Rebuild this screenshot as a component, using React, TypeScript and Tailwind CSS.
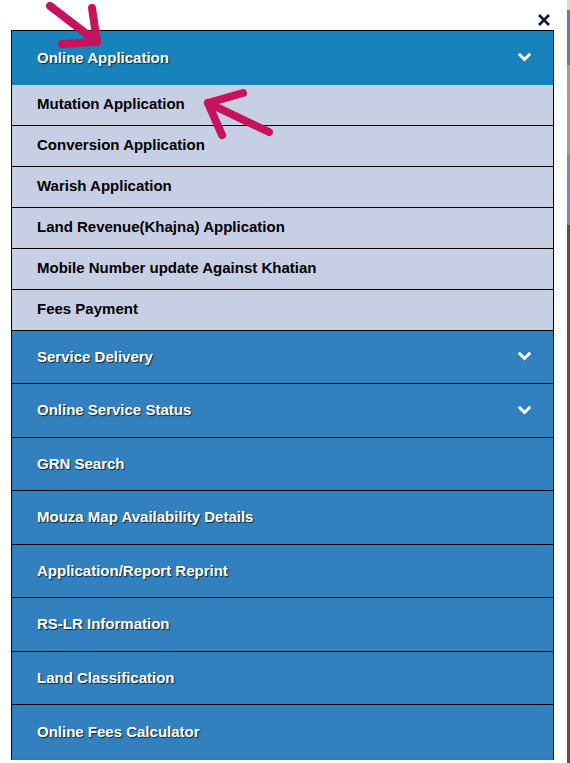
import React from "react";

const subItems = [
  "Mutation Application",
  "Conversion Application",
  "Warish Application",
  "Land Revenue(Khajna) Application",
  "Mobile Number update Against Khatian",
  "Fees Payment",
];

const blueItems: { label: string; chevron?: boolean }[] = [
  { label: "Service Delivery", chevron: true },
  { label: "Online Service Status", chevron: true },
  { label: "GRN Search" },
  { label: "Mouza Map Availability Details" },
  { label: "Application/Report Reprint" },
  { label: "RS-LR Information" },
  { label: "Land Classification" },
  { label: "Online Fees Calculator" },
];

function Chevron() {
  return (
    <svg width="13" height="9" viewBox="0 0 13 9" className="shrink-0">
      <path d="M1.8 1.8 L6.5 6.5 L11.2 1.8" fill="none" stroke="#ffffff" strokeWidth="3" strokeLinecap="square" />
    </svg>
  );
}

const font = { fontFamily: '"Liberation Sans", Arial, sans-serif' };

export default function App() {
  return (
    <div className="relative w-[570px] h-[763px] bg-white overflow-hidden" style={font}>
      <div className="flex h-full">
        <div className="w-[567px] flex flex-col">
          <div className="h-[30px] flex justify-end items-start pr-[16px] pt-[13px]">
            <svg width="14" height="14" viewBox="0 0 14 14">
              <path d="M2 2 L12 12 M12 2 L2 12" stroke="#0b1733" strokeWidth="2.6" strokeLinecap="butt" />
            </svg>
          </div>
          <div className="ml-[11px] w-[543px] border-x border-t border-black border-b border-b-[#1b82bb] flex flex-col">
            <div className="h-[53.5px] bg-[#1782bb] flex items-center justify-between pl-[25px] pr-[22px]">
              <span className="text-white font-bold text-[15px] [text-shadow:1px_1px_1px_rgba(0,0,0,0.7)]">
                Online Application
              </span>
              <Chevron />
            </div>
            {subItems.map((s) => (
              <div
                key={s}
                className="h-[41px] bg-[#c7cfe4] border-b border-black flex items-center pl-[25px]"
              >
                <span className="text-black font-bold text-[15px]">{s}</span>
              </div>
            ))}
            {blueItems.map((b, i) => (
              <div
                key={b.label}
                className={
                  "h-[53.5px] bg-[#3380be] flex items-center justify-between pl-[25px] pr-[22px] " +
                  (i < blueItems.length - 1 ? "border-b border-black" : "")
                }
              >
                <span className="text-white font-bold text-[15px] [text-shadow:1px_1px_1px_rgba(0,0,0,0.7)]">
                  {b.label}
                </span>
                {b.chevron ? <Chevron /> : null}
              </div>
            ))}
          </div>
        </div>
        <div className="w-[3px] flex flex-col">
          <div className="h-[10px] bg-[#d8d8d8]" />
          <div className="h-[55px] bg-[#5a7fa8]" />
          <div className="h-[90px] bg-[#9a9ea3]" />
          <div className="h-[70px] bg-[#6f8fb5]" />
          <div className="flex-1 bg-[#4d5a3c]" />
        </div>
      </div>
      <svg className="absolute inset-0 pointer-events-none" width="570" height="763" viewBox="0 0 570 763">
        <g stroke="#c8125c" strokeWidth="8" strokeLinecap="round" strokeLinejoin="round" fill="none">
          <path d="M50 6 L97 42" />
          <path d="M62 44 L97 42 L92 8" />
          <path d="M269 132 L208 103" />
          <path d="M243 93 L208 103 L222 135" />
        </g>
      </svg>
    </div>
  );
}
